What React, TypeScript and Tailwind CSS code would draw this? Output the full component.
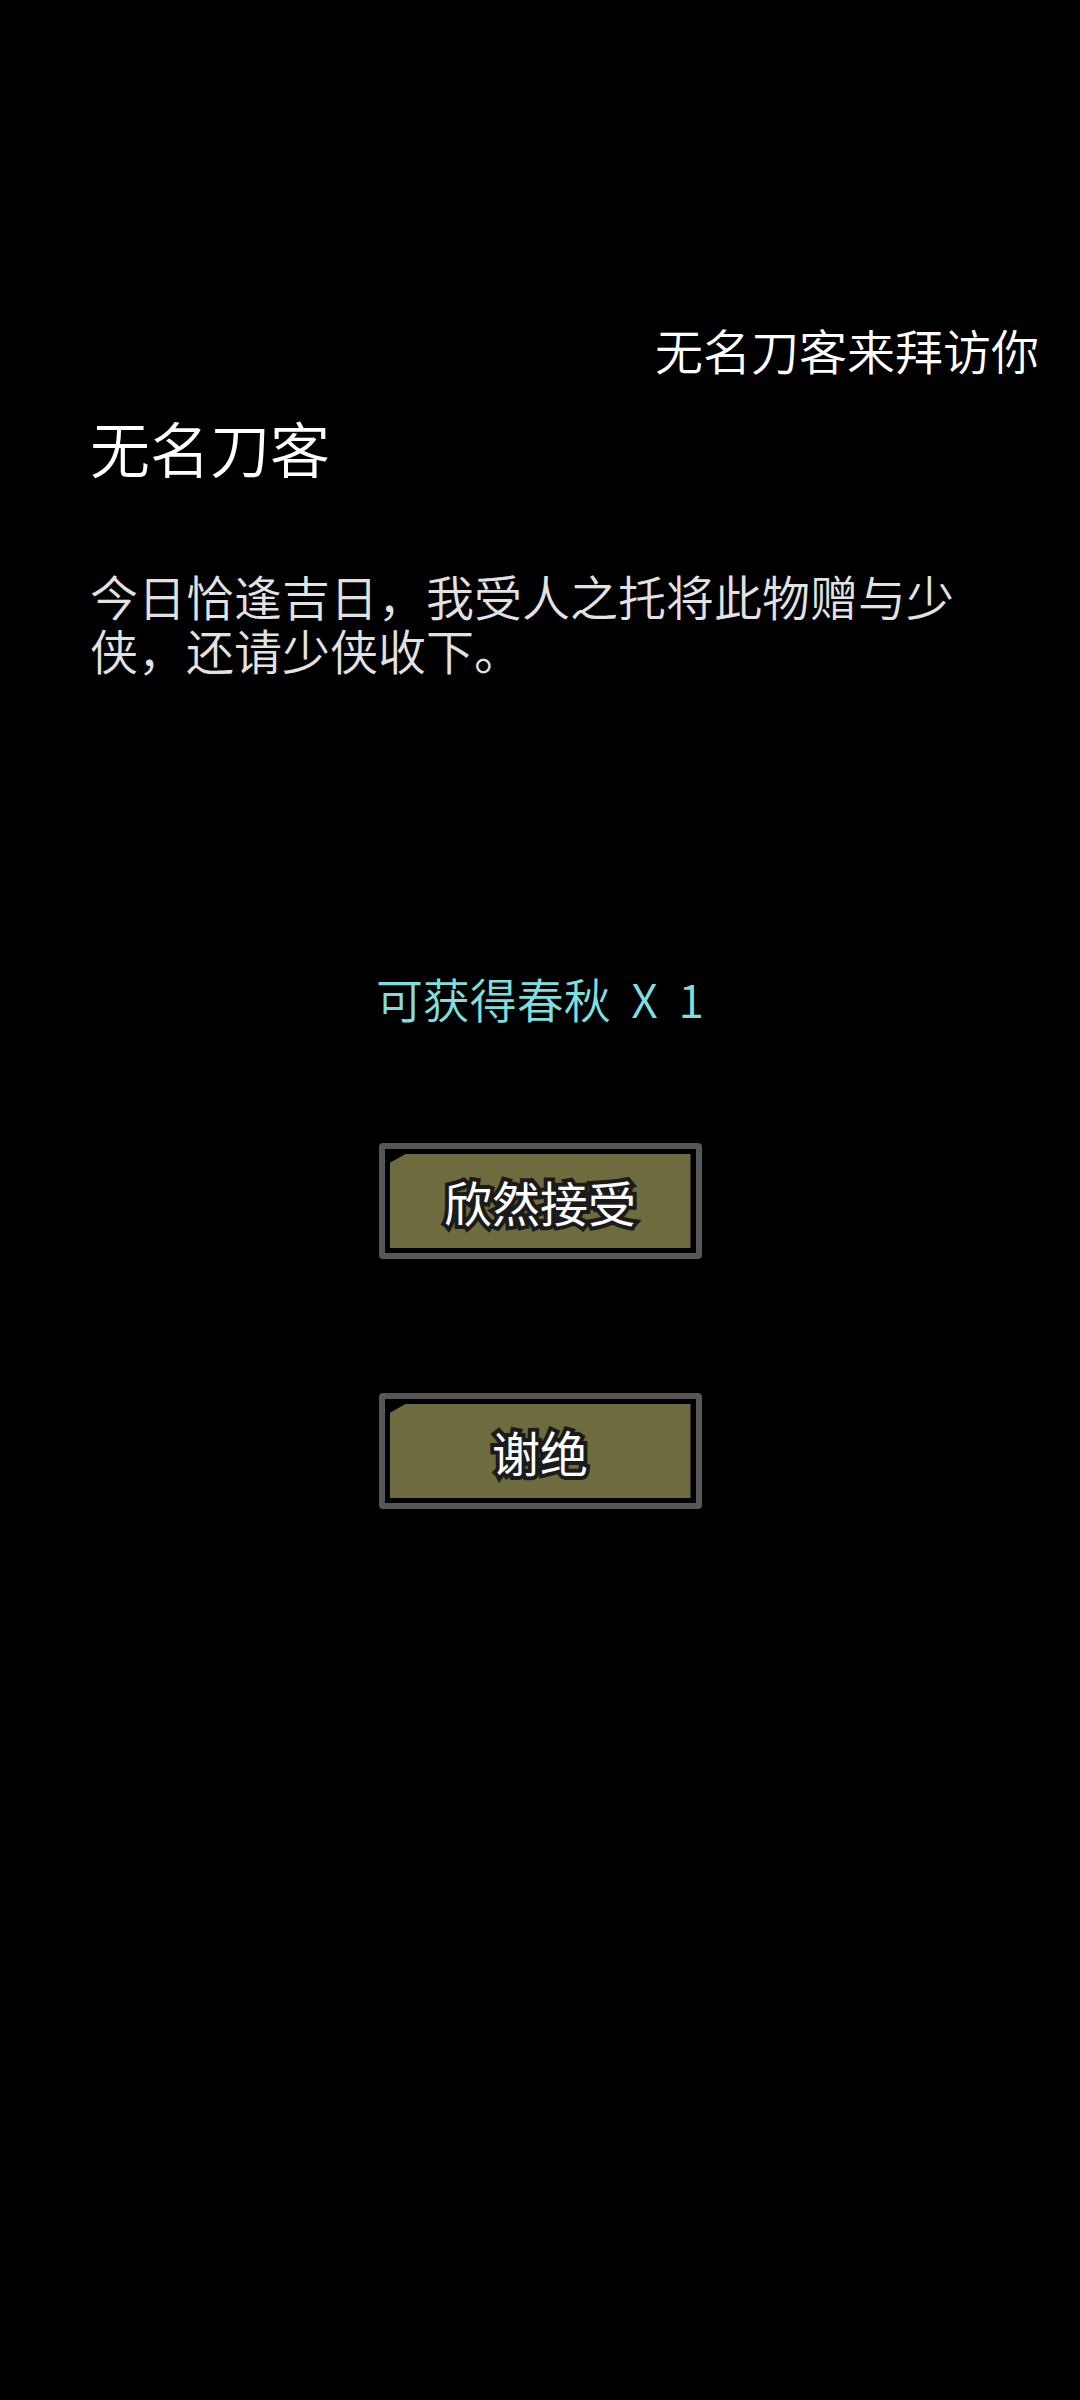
import React from 'react';

const font = "font-['Noto_Sans_CJK_SC','Noto_Sans',sans-serif]";

const ChoiceButton: React.FC<{ label: string; className?: string }> = ({ label, className }) => (
  <button
    type="button"
    className={`mx-auto block w-[323px] rounded-[4px] border-[6px] border-[#575757] bg-black p-[5px] ${className ?? ''}`}
  >
    <div className="flex h-[94px] items-center justify-center bg-[#6e6c3e] [clip-path:polygon(16px_0,100%_0,100%_100%,0_100%,0_9px)]">
      <span className="text-[48px] font-normal leading-none text-white [paint-order:stroke_fill] [-webkit-text-stroke:8px_#1b1b1b]">
        {label}
      </span>
    </div>
  </button>
);

const App: React.FC = () => {
  return (
    <div className={`min-h-[2400px] w-[1080px] bg-black font-[350] ${font}`}>
      <div className="pt-[317px] pr-[41px] text-right text-[48px] leading-[64px] text-white">无名刀客来拜访你</div>

      <div className="mt-[26px] pl-[90px] text-[60px] leading-[80px] text-white">无名刀客</div>

      <p className="mt-[81px] ml-[90px] w-[900px] text-[48px] leading-[54px] text-[#e2e2e2]">
        今日恰逢吉日，我受人之托将此物赠与少侠，还请少侠收下。
      </p>

      <div className="mt-[292px] text-center text-[47px] leading-[60px] text-[#7fdfdf] [word-spacing:10px]">
        可获得春秋 X 1
      </div>

      <ChoiceButton label="欣然接受" className="mt-[115px]" />
      <ChoiceButton label="谢绝" className="mt-[134px]" />
    </div>
  );
};

export default App;
